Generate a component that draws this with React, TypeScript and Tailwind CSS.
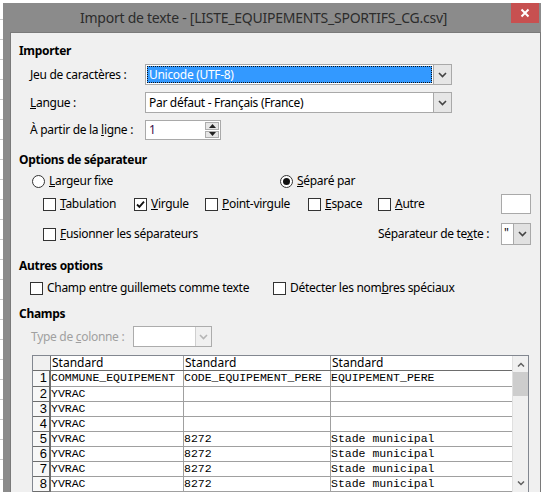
import React from 'react';

const sans = { fontFamily: '"Noto Sans", "Open Sans", Arial, sans-serif' };
const mono = { fontFamily: '"Liberation Mono", "Courier New", monospace' };
const num = { fontFamily: '"Liberation Sans", Arial, sans-serif' };

const Chevron = ({ color = '#444' }: { color?: string }) => (
  <svg width="9" height="6" viewBox="0 0 9 6">
    <path d="M1 1l3.5 3.5L8 1" fill="none" stroke={color} strokeWidth="1.6" />
  </svg>
);

const Check = ({ checked = false }: { checked?: boolean }) => (
  <span className="w-[13px] h-[13px] border border-[#333] bg-white flex items-center justify-center shrink-0">
    {checked && (
      <svg width="9" height="9" viewBox="0 0 9 9">
        <path d="M1 4.5l2.4 2.4L8 1.6" fill="none" stroke="#111" strokeWidth="1.8" />
      </svg>
    )}
  </span>
);

const Radio = ({ on = false }: { on?: boolean }) => (
  <span className="w-[13px] h-[13px] rounded-full border border-[#333] bg-white flex items-center justify-center shrink-0">
    {on && <span className="w-[7px] h-[7px] rounded-full bg-[#111]" />}
  </span>
);

const rows = [
  ['1', 'COMMUNE_EQUIPEMENT', 'CODE_EQUIPEMENT_PERE', 'EQUIPEMENT_PERE'],
  ['2', 'YVRAC', '', ''],
  ['3', 'YVRAC', '', ''],
  ['4', 'YVRAC', '', ''],
  ['5', 'YVRAC', '8272', 'Stade municipal'],
  ['6', 'YVRAC', '8272', 'Stade municipal'],
  ['7', 'YVRAC', '8272', 'Stade municipal'],
  ['8', 'YVRAC', '8272', 'Stade municipal'],
];

export default function App() {
  return (
    <div className="w-[541px] h-[492px] overflow-hidden bg-white relative text-[12px] tracking-[-0.3px] text-black" style={sans}>
      {/* sheet behind the dialog */}
      <div className="absolute left-0 top-0 w-[3px] h-full flex flex-col">
        {Array.from({ length: 24 }).map((_, i) => (
          <div key={i} className="h-[20px] border-b border-[#c8c8c8]" />
        ))}
      </div>

      <div className="ml-[3px] mt-[3px] w-[545px] h-[489px] bg-[#8b8b8b] flex flex-col px-[7px]">
        {/* title bar */}
        <div className="h-[29px] flex items-start -mx-[7px]">
          <div className="flex-1 h-[29px] flex items-center pl-[77px] text-[14px] tracking-[-0.25px] text-[#2c2c2c]">
            Import de texte - [LISTE_EQUIPEMENTS_SPORTIFS_CG.csv]
          </div>
          <div className="w-[28px] h-[20px] bg-[#c75050] flex items-center justify-center mr-[9px]">
            <svg width="10" height="10" viewBox="0 0 10 10">
              <path d="M1.5 1.5l7 7M8.5 1.5l-7 7" stroke="#fff" strokeWidth="2" />
            </svg>
          </div>
        </div>

        {/* client */}
        <div className="flex-1 bg-[#f0f0f0] border-t border-x border-[#7a7a7a] flex flex-col overflow-hidden">
          <div className="mt-[10px] pl-[8px] h-4 leading-4 font-bold">Importer</div>

          <div className="mt-[5px] pl-[19px] flex items-center h-[21px]">
            <span className="w-[115px]"><u>J</u>eu de caractères :</span>
            <div className="w-[307px] h-[21px] border border-[#a9a9a9] bg-white flex">
              <div className="flex-1 m-[1px] bg-[#3399ff] border border-dotted border-[#111] text-white flex items-center pl-[1px]">Unicode (UTF-8)</div>
              <div className="w-[18px] bg-[#e6e6e6] border-l border-[#a9a9a9] flex items-center justify-center"><Chevron /></div>
            </div>
          </div>

          <div className="mt-[7px] pl-[19px] flex items-center h-[21px]">
            <span className="w-[115px]"><u>L</u>angue :</span>
            <div className="w-[307px] h-[21px] border border-[#a9a9a9] bg-white flex">
              <div className="flex-1 flex items-center pl-[3px]">Par défaut - Français (France)</div>
              <div className="w-[18px] bg-[#e6e6e6] border-l border-[#a9a9a9] flex items-center justify-center"><Chevron /></div>
            </div>
          </div>

          <div className="mt-[7px] pl-[19px] flex items-center h-[20px]">
            <span className="w-[115px]">À partir de la <u>l</u>igne :</span>
            <div className="w-[76px] h-[20px] border border-[#a9a9a9] bg-white flex items-center">
              <span className="flex-1 pl-[3px] text-[#3a0f4a]">1</span>
              <div className="w-[14px] h-[16px] mr-[1px] flex flex-col gap-[1px]">
                <div className="flex-1 bg-[#e6e6e6] border border-[#adadad] flex items-center justify-center">
                  <svg width="7" height="4" viewBox="0 0 7 4"><path d="M0 4L3.5 0L7 4z" fill="#222" /></svg>
                </div>
                <div className="flex-1 bg-[#e6e6e6] border border-[#adadad] flex items-center justify-center">
                  <svg width="7" height="4" viewBox="0 0 7 4"><path d="M0 0L3.5 4L7 0z" fill="#222" /></svg>
                </div>
              </div>
            </div>
          </div>

          <div className="mt-[12px] pl-[8px] h-4 leading-4 font-bold">Options de séparateur</div>

          <div className="mt-[5px] pl-[21px] flex items-center h-4">
            <div className="w-[248px] flex items-center gap-[4px]"><Radio /><span><u>L</u>argeur fixe</span></div>
            <div className="flex items-center gap-[4px]"><Radio on /><span><u>S</u>éparé par</span></div>
          </div>

          <div className="mt-[5px] pl-[32px] pr-[9px] flex items-center h-[20px]">
            <div className="w-[91px] flex items-center gap-[4px]"><Check /><span><u>T</u>abulation</span></div>
            <div className="w-[71px] flex items-center gap-[4px]"><Check checked /><span><u>V</u>irgule</span></div>
            <div className="w-[103px] flex items-center gap-[4px]"><Check /><span><u>P</u>oint-virgule</span></div>
            <div className="w-[70px] flex items-center gap-[4px]"><Check /><span><u>E</u>space</span></div>
            <div className="flex items-center gap-[4px]"><Check /><span><u>A</u>utre</span></div>
            <div className="ml-auto w-[30px] h-[20px] border border-[#a9a9a9] bg-white" />
          </div>

          <div className="mt-[9px] pl-[32px] pr-[9px] flex items-center h-[22px]">
            <div className="w-[335px] flex items-center gap-[4px]"><Check /><span><u>F</u>usionner les séparateurs</span></div>
            <span>Séparateur de te<u>x</u>te :</span>
            <div className="ml-auto w-[30px] h-[22px] border border-[#a9a9a9] bg-white flex">
              <span className="flex-1 pl-[2px] leading-[18px]">"</span>
              <div className="w-[17px] bg-[#e1e1e1] border-l border-[#a9a9a9] flex items-center justify-center"><Chevron /></div>
            </div>
          </div>

          <div className="mt-[13px] pl-[8px] h-4 leading-4 font-bold">Autres options</div>

          <div className="mt-[6px] pl-[19px] flex items-center h-4">
            <div className="w-[243px] flex items-center gap-[4px]"><Check /><span>Champ entre <u>g</u>uillemets comme texte</span></div>
            <div className="flex items-center gap-[4px]"><Check /><span>Détecter les nom<u>b</u>res spéciaux</span></div>
          </div>

          <div className="mt-[10px] pl-[8px] h-4 leading-4 font-bold">Champs</div>

          <div className="mt-[4px] pl-[20px] flex items-center h-[21px] text-[#a0a0a0]">
            <span className="w-[102px]">Type de <u>c</u>olonne :</span>
            <div className="w-[79px] h-[21px] border border-[#acacac] bg-white flex">
              <div className="flex-1" />
              <div className="w-[16px] bg-[#f0f0f0] border-l border-[#cfcfcf] flex items-center justify-center"><Chevron color="#b5b5b5" /></div>
            </div>
          </div>

          {/* preview table */}
          <div className="mt-[8px] ml-[21px] w-[497px] h-[140px] border border-[#828790] bg-white flex overflow-hidden shrink-0 tracking-normal">
            <div className="flex flex-col">
              <div className="flex h-[15px] border-b border-[#6d6d6d]">
                <div className="w-[18px] bg-[#f0f0f0] border-r border-[#6d6d6d]" />
                <div className="w-[133px] border-r border-[#a0a0a0] pl-[1px] leading-[14px]">Standard</div>
                <div className="w-[147px] border-r border-[#a0a0a0] pl-[1px] leading-[14px]">Standard</div>
                <div className="w-[181px] pl-[1px] leading-[14px]">Standard</div>
              </div>
              {rows.map((r, i) => (
                <div key={i} className={`flex ${i === 0 ? 'h-[16px]' : 'h-[15px]'}`}>
                  <div className="w-[18px] bg-[#f7f7f7] border-r-2 border-b border-[#6d6d6d] text-right pr-[2px] text-[13px] leading-[14px]" style={num}>{r[0]}</div>
                  <div className="w-[133px] border-r border-b border-[#a0a0a0] text-[11.5px] leading-[14px] whitespace-pre" style={mono}>{r[1]}</div>
                  <div className="w-[147px] border-r border-b border-[#a0a0a0] text-[11.5px] leading-[14px] whitespace-pre" style={mono}>{r[2]}</div>
                  <div className="w-[181px] border-b border-[#a0a0a0] text-[11.5px] leading-[14px] whitespace-pre" style={mono}>{r[3]}</div>
                </div>
              ))}
            </div>
            <div className="w-[17px] bg-[#f0f0f0] flex flex-col items-center border-l border-[#e0e0e0]">
              <div className="h-[16px] flex items-center justify-center">
                <svg width="8" height="5" viewBox="0 0 8 5"><path d="M1 4.5L4 1.5L7 4.5" fill="none" stroke="#606060" strokeWidth="1.5" /></svg>
              </div>
              <div className="w-[15px] h-[24px] bg-[#cdcdcd]" />
              <div className="flex-1" />
              <div className="h-[16px] mb-[3px] flex items-center justify-center">
                <svg width="8" height="5" viewBox="0 0 8 5"><path d="M1 0.5L4 3.5L7 0.5" fill="none" stroke="#606060" strokeWidth="1.5" /></svg>
              </div>
            </div>
          </div>
        </div>
      </div>
    </div>
  );
}
